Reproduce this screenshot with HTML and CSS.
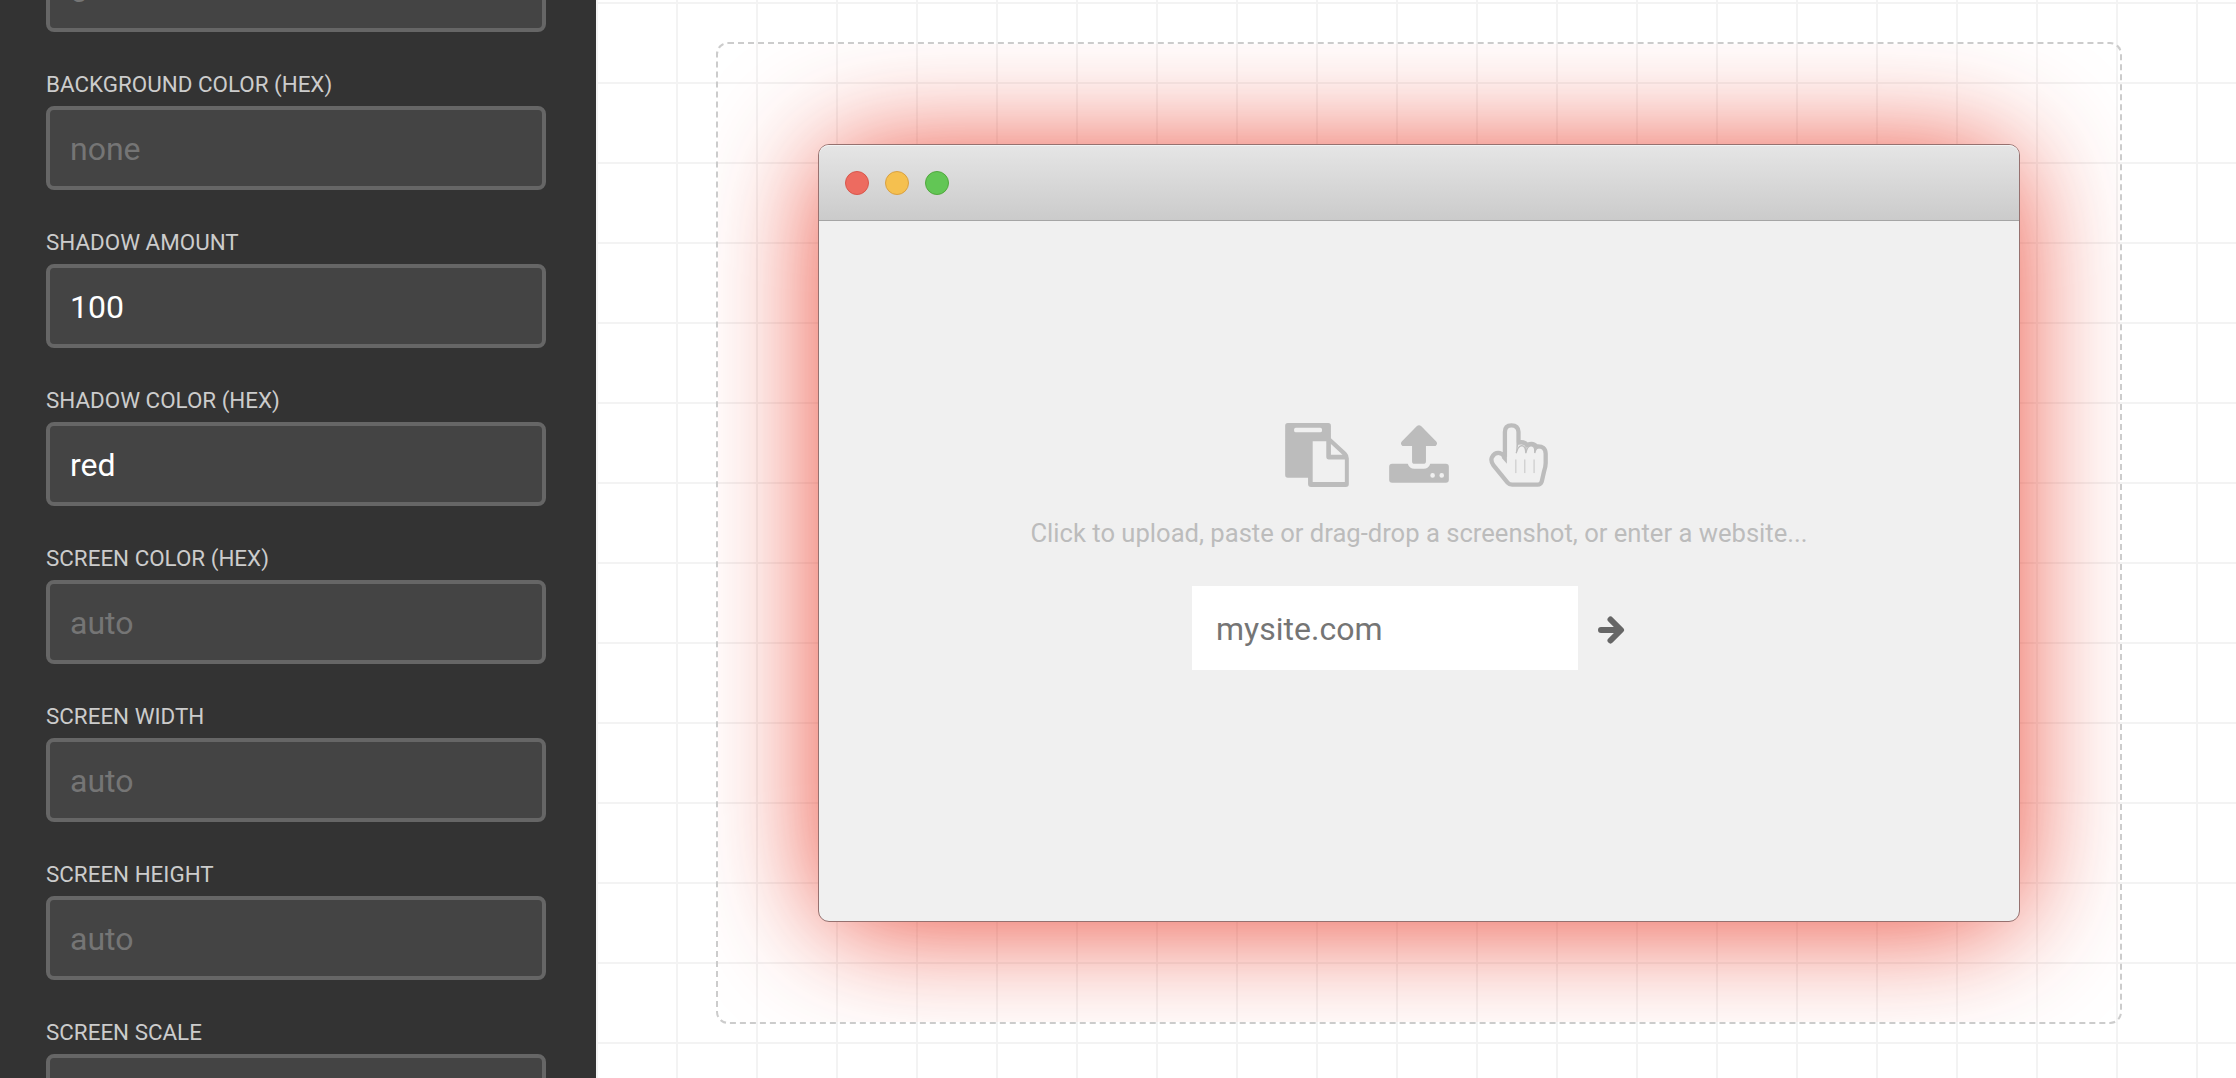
FILE: index.html
```html
<!DOCTYPE html>
<html lang="en">
<head>
<meta charset="utf-8">
<title>Browser frame</title>
<link rel="stylesheet" href="styles.css">
</head>
<body>
<aside class="sidebar">
  <label class="field"><span class="name"></span><input class="control" placeholder="0"></label>
  <label class="field"><span class="name">Background color (hex)</span><input class="control" placeholder="none"></label>
  <label class="field"><span class="name">Shadow amount</span><input class="control" value="100"></label>
  <label class="field"><span class="name">Shadow color (hex)</span><input class="control" value="red"></label>
  <label class="field"><span class="name">Screen color (hex)</span><input class="control" placeholder="auto"></label>
  <label class="field"><span class="name">Screen width</span><input class="control" placeholder="auto"></label>
  <label class="field"><span class="name">Screen height</span><input class="control" placeholder="auto"></label>
  <label class="field"><span class="name">Screen scale</span><input class="control"></label>
</aside>
<main class="canvas">
  <div class="bounds">
    <section class="window">
      <header class="titlebar">
        <span class="light close"></span><span class="light minimize"></span><span class="light expand"></span>
      </header>
      <div class="screen">
        <div class="icons">
          <svg width="64" height="64" viewBox="75 69 192 193">
            <path fill="#bcbcbc" fill-rule="evenodd" d="M83 69H205Q213 69 213 77V115L259 157Q267 165 267 176V253Q267 262 258 262H153Q144 262 144 253V234H83Q75 234 75 226V77Q75 69 83 69ZM107 83Q102 83 102 88V92Q102 97 107 97H181Q186 97 186 92V88Q186 83 181 83ZM158 124V247H255V179H207Q199 179 199 171V124ZM213 132V165H248Z"/>
          </svg>
          <svg width="60" height="64" viewBox="387 69 180 193">
            <path fill="#bcbcbc" fill-rule="evenodd" d="M470 79Q477 73 484 79L529 125Q535 132 527 138H498V184Q498 192 490 192H464Q456 192 456 184V138H427Q419 132 425 125ZM396 192H443Q448 207 463 207H491Q506 207 511 192H558Q567 192 567 201V240Q567 249 558 249H396Q387 249 387 240V201Q387 192 396 192ZM518 220A7 7 0 1 0 518 234A7 7 0 1 0 518 220ZM545.500 220A7 7 0 1 0 545.500 234A7 7 0 1 0 545.500 220Z"/>
          </svg>
          <svg width="59" height="64" viewBox="686 69 178 193" fill="none" stroke="#bcbcbc">
            <path stroke-width="13" stroke-linejoin="round" d="M734 171V96Q734 76 754 76T775 96V128Q792 124 801 135Q820 127 829 140Q857 137 857 162V190Q857 201 852 215L845 246Q842 255 833 255H756Q747 255 742 249L699 196Q690 183 695 172Q702 159 714 159Q724 159 734 171"/>
            <path fill="#bcbcbc" stroke="none" d="M740 160V192L724 174ZM769 130H776Q772 140 770 160H768ZM795 132H803Q798 144 798 158H796Q796 144 795 132ZM823 136H832Q826 146 825 158H823Z"/>
            <path stroke-width="4" d="M797 160Q797 137 784 137Q773 139 768 160M824 160Q826 137 812 137Q801 139 797 160M824 160Q827 143 838 143"/>
            <path stroke-width="2.500" d="M767 179V220M794 179V220M822 179V220"/>
          </svg>
        </div>
        <p class="hint">Click to upload, paste or drag-drop a screenshot, or enter a website...</p>
        <div class="url">
          <input class="site" placeholder="mysite.com">
          <svg class="go" width="28" height="28" viewBox="0 0 28 28" fill="none" stroke="#666" stroke-width="6" stroke-linecap="round" stroke-linejoin="round"><path d="M3 14H21M12.500 3.500L23 14L12.500 24.500"/></svg>
        </div>
      </div>
    </section>
  </div>
</main>
</body>
</html>
```
FILE: styles.css
```css
* { box-sizing: border-box; }
body {
  margin: 0;
  height: 1078px;
  display: flex;
  overflow: hidden;
  font-family: Roboto, sans-serif;
}
.sidebar {
  width: 596px;
  height: 1078px;
  flex: none;
  display: flex;
  flex-direction: column;
  gap: 32px;
  padding: 0 50px 0 46px;
  overflow: hidden;
  background: #333;
}
.field { display: block; flex: none; height: 126px; }
.field:first-child { margin-top: -94px; }
.name {
  display: block;
  height: 42px;
  line-height: 40px;
  font-size: 22.4px;
  text-transform: uppercase;
  color: #ccc;
}
.control {
  display: block;
  width: 500px;
  height: 84px;
  padding: 2px 20px 0;
  border: 4px solid #666;
  border-radius: 8px;
  background: #444;
  color: #fff;
  font: 32px Roboto, sans-serif;
}
.control::placeholder { color: #757575; }
.canvas {
  flex: 1;
  height: 1078px;
  padding: 42px 0 0 120px;
  background-color: #fff;
  background-image:
    linear-gradient(#f3f3f3 2px, transparent 2px),
    linear-gradient(90deg, #f3f3f3 2px, transparent 2px);
  background-size: 80px 80px;
  background-position: 0 2px;
}
.bounds {
  width: 1406px;
  height: 982px;
  padding: 100px;
  overflow: hidden;
  isolation: isolate;
  border: 2px dashed #ccc;
  border-radius: 12px;
}
.window {
  position: relative;
  width: 1202px;
  height: 778px;
  display: flex;
  flex-direction: column;
  border: 1px solid #96716f;
  border-radius: 11px;
  background: #f0f0f0;
}
/* softer-cornered glow underneath the window */
.window::before {
  content: "";
  position: absolute;
  inset: -1px;
  z-index: -1;
  border-radius: 50px;
  box-shadow: 0 5px 116px rgba(233, 55, 37, .9);
}
.titlebar {
  height: 76px;
  display: flex;
  align-items: center;
  gap: 16px;
  padding-left: 26px;
  border-top: 1px solid #f3f3f3;
  border-bottom: 1px solid #a5a5a5;
  border-radius: 10px 10px 0 0;
  background: linear-gradient(#e5e5e5, #cbcbcb);
}
.light { width: 24px; height: 24px; border-radius: 50%; border: 1px solid; }
.close { background: #ed6b60; border-color: #d8574c; }
.minimize { background: #f5c04f; border-color: #d9a142; }
.expand { background: #62c655; border-color: #51a83e; }
.screen { flex: 1; display: flex; flex-direction: column; align-items: center; padding-top: 202px; }
.icons { display: flex; gap: 40px; padding-right: 5px; }
.hint { margin: 28px 0 0; height: 36px; line-height: 36px; font-size: 25.6px; color: #bcbcbc; }
.url {
  display: flex;
  align-self: flex-start;
  align-items: center;
  gap: 20px;
  margin: 35px 0 0 373px;
}
.go { margin-top: 4px; }
.site {
  width: 386px;
  height: 84px;
  padding: 2px 24px 0;
  border: 0;
  background: #fff;
  font: 32px Roboto, sans-serif;
}
.site::placeholder { color: #757575; }
```
